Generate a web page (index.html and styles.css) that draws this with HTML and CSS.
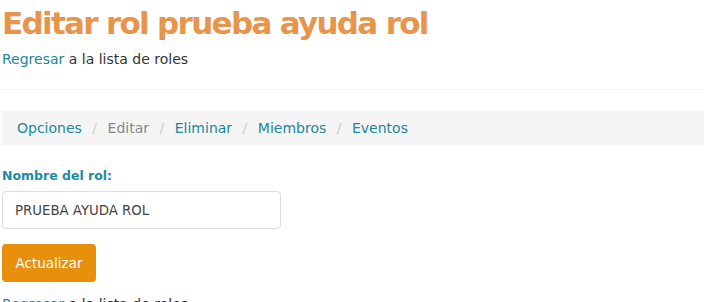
FILE: index.html
```html
<!DOCTYPE html>
<html lang="es">
<head>
    <meta charset="UTF-8">
    <meta name="viewport" content="width=device-width, initial-scale=1.0">
    <title>Editar rol</title>
    <link rel="stylesheet" href="styles.css">
</head>
<body>
    <div class="page">
        <h1 class="title">Editar rol prueba ayuda rol</h1>
        <p class="back"><a href="#">Regresar</a> a la lista de roles</p>
        <hr class="sep">

        <ul class="crumbs">
            <li><a href="#">Opciones</a></li>
            <li class="current">Editar</li>
            <li><a href="#">Eliminar</a></li>
            <li><a href="#">Miembros</a></li>
            <li><a href="#">Eventos</a></li>
        </ul>

        <form class="role-form">
            <label class="field-label" for="nombre">Nombre del rol:</label>
            <input class="field-input" id="nombre" type="text" value="PRUEBA AYUDA ROL">
            <button class="btn-update" type="button">Actualizar</button>
        </form>

        <p class="back back-bottom"><a href="#">Regresar</a> a la lista de roles</p>
    </div>
</body>
</html>
```

FILE: styles.css
```css
* {
    box-sizing: border-box;
}
body {
    margin: 0;
    background-color: #fff;
    font-family: "DejaVu Sans", "Noto Sans", sans-serif;
    color: #333;
}
.page {
    padding: 0 0 0 2px;
}
.title {
    margin: 0;
    padding-top: 4px;
    font-size: 31px;
    line-height: 38px;
    font-weight: bold;
    color: #e8944b;
    letter-spacing: -1.7px;
}
.back {
    margin: 8px 0 0;
    font-size: 14px;
    line-height: 18px;
    color: #333;
}
.back a {
    color: #23869b;
    text-decoration: none;
}
.sep {
    margin: 21px 0 0 -2px;
    border: none;
    border-top: 1px solid #f2f2f2;
}

/* migas */
.crumbs {
    list-style: none;
    margin: 21px 0 0;
    padding: 0 15px;
    height: 34px;
    background-color: #f5f5f5;
    display: flex;
    align-items: center;
    font-size: 14px;
}
.crumbs li + li::before {
    content: "/";
    color: #ccc;
    padding: 0 10.5px;
}
.crumbs a {
    color: #23869b;
    text-decoration: none;
}
.crumbs .current {
    color: #888;
}

/* formulario */
.role-form {
    display: flex;
    flex-direction: column;
    align-items: flex-start;
    margin-top: 23px;
}
.field-label {
    font-size: 12.5px;
    font-weight: bold;
    color: #1f8aa2;
    line-height: 16px;
}
.field-input {
    margin-top: 7px;
    width: 279px;
    height: 38px;
    padding: 0 12px;
    border: 1px solid #dcdcdc;
    border-radius: 4px;
    font-family: inherit;
    font-size: 13.3px;
    color: #444;
}
.btn-update {
    margin-top: 15px;
    width: 94px;
    height: 38px;
    border: none;
    border-radius: 4px;
    background-color: #e8900c;
    color: #fff;
    font-family: inherit;
    font-size: 13.5px;
}
.back-bottom {
    margin-top: 13px;
}
```
